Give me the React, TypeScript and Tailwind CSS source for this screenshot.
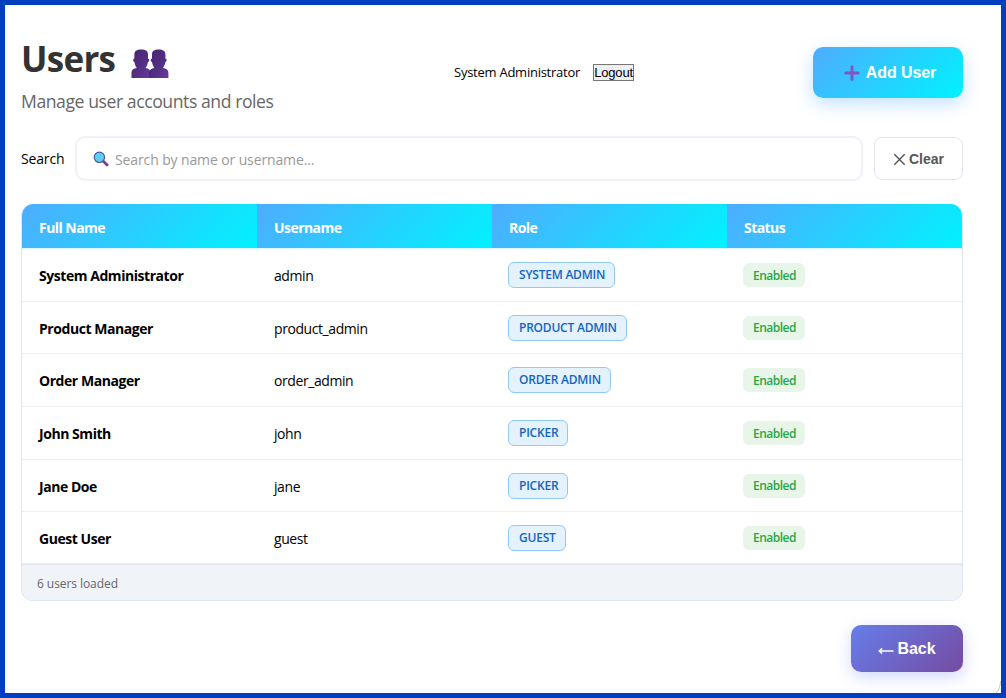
import { useState } from "react";

type User = {
  fullName: string;
  username: string;
  role: string;
  rowHeight: string;
};

const users: User[] = [
  { fullName: "System Administrator", username: "admin", role: "SYSTEM ADMIN", rowHeight: "h-[53px]" },
  { fullName: "Product Manager", username: "product_admin", role: "PRODUCT ADMIN", rowHeight: "h-[52px]" },
  { fullName: "Order Manager", username: "order_admin", role: "ORDER ADMIN", rowHeight: "h-[53px]" },
  { fullName: "John Smith", username: "john", role: "PICKER", rowHeight: "h-[53px]" },
  { fullName: "Jane Doe", username: "jane", role: "PICKER", rowHeight: "h-[52px]" },
  { fullName: "Guest User", username: "guest", role: "GUEST", rowHeight: "h-[52px]" },
];

const columns = ["Full Name", "Username", "Role", "Status"];

function UsersIcon() {
  return (
    <svg width="38" height="30" viewBox="0 0 38 30" className="shrink-0">
      <defs>
        <linearGradient id="bust" x1="0" y1="0" x2="1" y2="1">
          <stop offset="0" stopColor="#45256f" />
          <stop offset="0.6" stopColor="#553085" />
          <stop offset="1" stopColor="#6a3aa2" />
        </linearGradient>
      </defs>
      <g fill="url(#bust)">
        <path d="M3.4 5.5C3.4 2 5.6.6 10.2.6S17 2 17 5.500v4c1.700 0 1.700 3.300 0 3.500-.4 2.400-1.200 4.500-2.500 6 3.300.3 5 1.800 5 4.800V29H.5v-5.200c0-3 2-4.500 5.300-4.800-1.300-1.500-2-3.600-2.400-6-1.600-.2-1.600-3.500 0-3.500z" />
        <path d="M21 5.500C21 2 23.200.6 27.600.6S34.400 2 34.400 5.500v4c1.600 0 1.600 3.300 0 3.500-.4 2.400-1.200 4.500-2.500 6 3.500.3 5.500 1.800 5.500 4.800V29H18.500v-5.200c0-3 1.700-4.500 5-4.800-1.300-1.500-2.100-3.600-2.500-6-1.600-.2-1.600-3.500 0-3.500z" />
      </g>
      <path d="M18.700 28.500v-4c0-2 .8-3.300 2-4.200" fill="none" stroke="#3b2062" strokeWidth="0.6" />
    </svg>
  );
}

function SearchIcon() {
  return (
    <svg width="16" height="16" viewBox="0 0 16 16" className="shrink-0">
      <path d="M10.3 10.3l3.8 3.6" stroke="#7b3f91" strokeWidth="2.8" strokeLinecap="round" />
      <circle cx="6.4" cy="6.3" r="5.2" fill="#5fcdf2" stroke="#4a5a9e" strokeWidth="1.2" />
    </svg>
  );
}

export default function App() {
  const [search, setSearch] = useState("");

  const filteredUsers = users.filter(
    (user) =>
      user.fullName.toLowerCase().includes(search.toLowerCase()) ||
      user.username.toLowerCase().includes(search.toLowerCase())
  );

  return (
    <div className="relative h-[698px] w-[1006px] overflow-hidden border-5 border-[#0040c0] bg-white pl-4 pr-[38px] font-['Open_Sans',sans-serif] text-black">
      <header className="flex h-[131px] items-start justify-between">
        <div className="w-[433px] pt-[30px]">
          <h1 className="flex h-12 items-center gap-4 text-[35px] font-bold leading-[48px] tracking-[-0.7px] text-[#333]">
            Users
            <span className="pt-2.5">
              <UsersIcon />
            </span>
          </h1>
          <p className="mt-1 text-[17.6px] leading-7 tracking-[-0.43px] text-[#666]">
            Manage user accounts and roles
          </p>
        </div>
        <div className="flex flex-1 items-center gap-[13px] pt-[57px]">
          <span className="text-[13px] leading-5 tracking-[-0.25px]">System Administrator</span>
          <button className="h-[17px] w-[41px] border border-[#767676] bg-[#efefef] font-['Liberation_Sans',sans-serif] text-[13px] leading-[15px] tracking-[-0.2px]">
            Logout
          </button>
        </div>
        <button className="mt-[42px] flex h-[51px] w-[150px] items-center justify-center gap-[6px] rounded-[10px] bg-[linear-gradient(135deg,#4facfe,#00f2fe)] pl-1 pt-px font-['Liberation_Sans',sans-serif] text-base font-bold tracking-[-0.1px] text-white shadow-[0_6px_18px_rgba(79,172,254,0.35)]">
          <svg width="16" height="16" viewBox="0 0 16 16">
            <path d="M8 1.8v12.4M1.8 8h12.4" stroke="#7e58c2" strokeWidth="3" strokeLinecap="round" />
          </svg>
          Add User
        </button>
      </header>

      <div className="flex h-[45px] items-center">
        <label htmlFor="search" className="w-[54px] pt-px text-sm tracking-[-0.15px]">
          Search
        </label>
        <div className="flex h-[45px] w-[788px] items-center gap-[6px] rounded-[10px] border-2 border-[#f0f0f9] pl-4">
          <SearchIcon />
          <input
            id="search"
            value={search}
            onChange={(e) => setSearch(e.target.value)}
            placeholder="Search by name or username..."
            className="flex-1 pt-0.5 text-sm tracking-[-0.12px] outline-none placeholder:text-[#999]"
          />
        </div>
        <button
          onClick={() => setSearch("")}
          className="ml-[11px] flex h-[43px] w-[89px] items-center justify-center gap-[3px] rounded-lg border border-[#e4e4f0] pt-px font-['Liberation_Sans',sans-serif] text-sm font-bold text-[#555]"
        >
          <svg width="13" height="13" viewBox="0 0 13 13" fill="none" stroke="#555" strokeWidth="1.4">
            <path d="M1.3 1.3l10.4 10.4M11.7 1.3L1.3 11.7" />
          </svg>
          Clear
        </button>
      </div>

      <section className="mt-[23px] h-[397px] overflow-hidden rounded-xl border-x border-b border-[#dfe5ef]">
        <div className="grid h-[45px] grid-cols-4 border-b border-[#dff3fb]">
          {columns.map((column) => (
            <div
              key={column}
              className="flex items-center bg-[linear-gradient(135deg,#4facfe,#00f2fe)] pl-[17px] pt-1 text-sm font-bold tracking-[-0.55px] text-white"
            >
              {column}
            </div>
          ))}
        </div>
        {filteredUsers.map((user) => (
          <div
            key={user.username}
            className={`grid grid-cols-4 items-center border-b border-[#eceff3] text-sm ${user.rowHeight}`}
          >
            <span className="pl-[17px] pt-0.5 font-bold tracking-[-0.45px]">{user.fullName}</span>
            <span className="pl-[17px] pt-0.5 tracking-[-0.42px]">{user.username}</span>
            <span className="pl-4">
              <span className="inline-flex h-[26px] items-center rounded-md border border-[#90caf9] bg-[#e3f2fd] pl-2.5 pr-[9px] text-xs font-semibold tracking-[-0.22px] text-[#1565c0]">
                {user.role}
              </span>
            </span>
            <span className="pl-4">
              <span className="inline-flex h-6 items-center rounded-md bg-[#e8f5e9] pl-2.5 pr-[9px] pt-px text-xs font-semibold tracking-[-0.5px] text-[#28a745]">
                Enabled
              </span>
            </span>
          </div>
        ))}
        <div className="h-[37px] border-t border-[#dfe5ef] bg-[#f0f3f8] pl-[15px] pt-[9px] text-xs leading-5 tracking-[-0.07px] text-[#666]">
          {filteredUsers.length} users loaded
        </div>
      </section>

      <footer className="mt-6 flex justify-end">
        <button className="flex h-[47px] w-28 items-center justify-center gap-[3px] rounded-[10px] bg-[linear-gradient(135deg,#667eea,#764ba2)] font-['Liberation_Sans',sans-serif] text-base font-bold text-white shadow-[0_5px_15px_rgba(102,126,234,0.3)]">
          <svg width="16" height="10" viewBox="0 0 16 10" fill="none" stroke="white" strokeWidth="1.3" className="mt-1">
            <path d="M15.5 5H1.5M4.2 2.3L1.2 5l3 2.7" />
          </svg>
          Back
        </button>
      </footer>

      {/* rounded corner of the window */}
      <svg width="6" height="12" viewBox="0 0 6 12" fill="none" className="absolute bottom-0 right-0">
        <path d="M5.5 0C5.5 5 4 9 1 12" stroke="#b5b5bd" strokeWidth="0.8" />
      </svg>
    </div>
  );
}
